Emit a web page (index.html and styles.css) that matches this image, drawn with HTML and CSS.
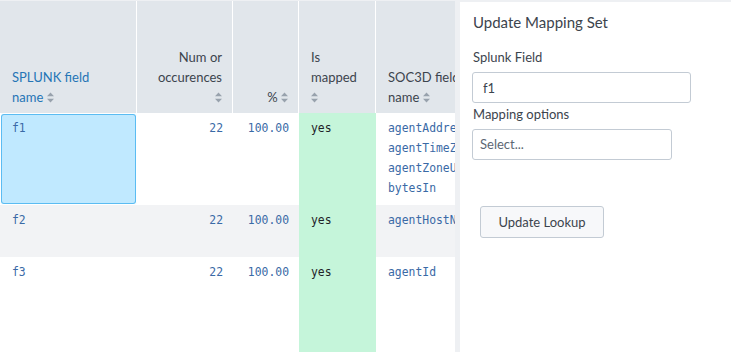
FILE: index.html
```html
<!DOCTYPE html>
<html>
<head>
  <title>Mapping Set</title>
  <meta name="viewport" content="width=device-width, initial-scale=1.0">
  <link rel="stylesheet" href="styles.css">
</head>
<body>
  <div class="table-panel">
    <table class="fields">
      <colgroup>
        <col class="c-name">
        <col class="c-num">
        <col class="c-pct">
        <col class="c-map">
        <col class="c-soc">
      </colgroup>
      <thead>
        <tr>
          <th class="link">SPLUNK field<br>name <svg class="sort" viewBox="0 0 7 11"><path d="M0 4.2L3.5 0.5 7 4.2z M0 6.8L3.5 10.5 7 6.8z"/></svg></th>
          <th class="num">Num or<br>occurences<br><svg class="sort" viewBox="0 0 7 11"><path d="M0 4.2L3.5 0.5 7 4.2z M0 6.8L3.5 10.5 7 6.8z"/></svg></th>
          <th class="num">% <svg class="sort" viewBox="0 0 7 11"><path d="M0 4.2L3.5 0.5 7 4.2z M0 6.8L3.5 10.5 7 6.8z"/></svg></th>
          <th>Is<br>mapped<br><svg class="sort" viewBox="0 0 7 11"><path d="M0 4.2L3.5 0.5 7 4.2z M0 6.8L3.5 10.5 7 6.8z"/></svg></th>
          <th>SOC3D field<br>name <svg class="sort" viewBox="0 0 7 11"><path d="M0 4.2L3.5 0.5 7 4.2z M0 6.8L3.5 10.5 7 6.8z"/></svg></th>
        </tr>
      </thead>
      <tbody>
        <tr class="row-1">
          <td class="selected">f1</td>
          <td class="num">22</td>
          <td class="num">100.00</td>
          <td class="mapped">yes</td>
          <td>agentAddress<br>agentTimeZone<br>agentZoneURI<br>bytesIn</td>
        </tr>
        <tr class="row-2 odd">
          <td>f2</td>
          <td class="num">22</td>
          <td class="num">100.00</td>
          <td class="mapped">yes</td>
          <td>agentHostName</td>
        </tr>
        <tr class="row-3">
          <td>f3</td>
          <td class="num">22</td>
          <td class="num">100.00</td>
          <td class="mapped">yes</td>
          <td>agentId</td>
        </tr>
      </tbody>
    </table>
  </div>

  <div class="form-panel">
    <h2 class="title">Update Mapping Set</h2>
    <label class="label" for="splunk-field">Splunk Field</label>
    <input class="text-input" id="splunk-field" type="text" value="f1">
    <label class="label" for="mapping-options">Mapping options</label>
    <div class="select" id="mapping-options">Select...</div>
    <button class="update-button">Update Lookup</button>
  </div>
</body>
</html>
```

FILE: styles.css
```css
html, body {
  height: 100%;
}
body {
  margin: 0;
  padding-top: 1px;
  box-sizing: border-box;
  display: flex;
  background-color: #eef0f3;
  font-family: Lato, "Open Sans", sans-serif;
  color: #3c444d;
  overflow: hidden;
}
.table-panel {
  width: 455px;
  flex: none;
  overflow: hidden;
  background-color: #fff;
}
.fields {
  table-layout: fixed;
  width: 561px;
  border-collapse: separate;
  border-spacing: 0;
}
.c-name { width: 137px; }
.c-num { width: 96px; }
.c-pct { width: 66px; }
.c-map { width: 77px; }
.c-soc { width: 185px; }

.fields th {
  height: 112px;
  box-sizing: border-box;
  padding: 0 10px 6px 12px;
  vertical-align: bottom;
  text-align: left;
  font-weight: normal;
  font-size: 13px;
  line-height: 20px;
  background-color: #e1e6eb;
  border-right: 1px solid #fff;
  white-space: nowrap;
}
.fields th.num {
  text-align: right;
}
.fields th.link {
  color: #2575b6;
}
.sort {
  width: 7px;
  height: 11px;
  fill: #98a2ad;
  vertical-align: -1px;
}

.fields td {
  padding: 5px 10px 0 12px;
  vertical-align: top;
  font-family: "DejaVu Sans Mono", monospace;
  font-size: 11.4px;
  line-height: 20px;
  color: #3a6aa6;
  white-space: nowrap;
  overflow: hidden;
  box-sizing: border-box;
}
.fields td.num {
  text-align: right;
}
.fields td.mapped {
  background-color: #c5f5da;
  color: #1f2328;
}
.row-1 td { height: 92px; }
.row-2 td { height: 52px; }
.row-3 td { height: 100px; }
.odd td {
  background-color: #f2f3f5;
}
.fields td.selected {
  background-color: #c0e9ff;
  box-shadow: inset 0 0 0 1px #5bbcf2;
  border-radius: 3px;
  border: 1px solid #fff;
  padding: 4px 9px 0 11px;
}

.form-panel {
  flex: 1;
  margin-left: 5px;
  margin-top: 1px;
  padding: 10px 13px;
  background-color: #fff;
}
.title {
  margin: 0 0 16px;
  font-size: 15px;
  line-height: 20px;
  font-weight: normal;
}
.label {
  display: block;
  font-size: 13px;
  line-height: 18px;
  margin-bottom: 6px;
}
.text-input, .select {
  display: block;
  box-sizing: border-box;
  height: 31px;
  padding: 0 10px;
  border: 1px solid #c3cbd4;
  border-radius: 3px;
  background: #fff;
  font-family: Lato, "Open Sans", sans-serif;
  font-size: 13px;
  color: #3c444d;
}
.text-input {
  width: 219px;
  margin: 0 0 2px -1px;
}
.select {
  width: 200px;
  margin-left: -1px;
  line-height: 29px;
  padding-left: 7px;
  color: #5c6773;
}
.update-button {
  display: block;
  margin: 46px 0 0 7px;
  width: 124px;
  height: 32px;
  border: 1px solid #c3cbd4;
  border-radius: 3px;
  background-color: #f7f8fa;
  font-family: Lato, "Open Sans", sans-serif;
  font-size: 13px;
  color: #3c444d;
}
```
